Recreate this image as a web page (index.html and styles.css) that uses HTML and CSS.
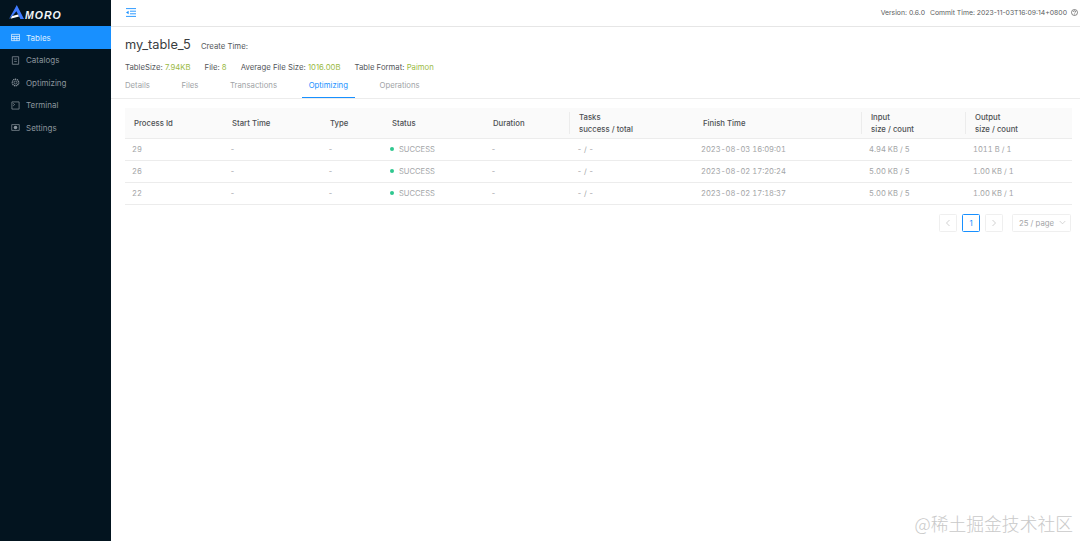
FILE: index.html
```html
<!DOCTYPE html>
<html lang="en">
<head>
<meta charset="utf-8">
<title>Amoro</title>
<link rel="stylesheet" href="styles.css">
</head>
<body>
<div class="app">
  <aside class="sidebar">
    <div class="logo">
      <svg class="logo-mark" viewBox="0 0 15 14"><path d="M7.8 0 L15 14 L11.4 14 L7.4 6.2 L3.8 10.6 L0 14 Z" fill="#3f7bff"/><path d="M3.2 11 L9 9.6 L10 11.4 L1.5 13.8 Z" fill="#fff"/></svg>
      <span class="logo-text">MORO</span>
    </div>
    <nav class="menu">
      <a class="menu-item active">
        <svg class="menu-icon" viewBox="0 0 10 10"><path d="M.5 1.5h9v7h-9zM.5 3.8h9M.5 6.2h9M3.5 3.8v4.7M6.5 3.8v4.7" fill="none" stroke="currentColor" stroke-width=".9"/></svg>
        <span>Tables</span>
      </a>
      <a class="menu-item">
        <svg class="menu-icon" viewBox="0 0 10 10"><path d="M1.5 .8h7v8.4h-7zM3.5 3.5h3M3.5 6h3" fill="none" stroke="currentColor" stroke-width=".8"/></svg>
        <span>Catalogs</span>
      </a>
      <a class="menu-item">
        <svg class="menu-icon" viewBox="0 0 10 10"><circle cx="5" cy="5" r="1.6" fill="none" stroke="currentColor" stroke-width=".8"/><circle cx="5" cy="5" r="3.6" fill="none" stroke="currentColor" stroke-width="1.5" stroke-dasharray="1.3 .7"/></svg>
        <span>Optimizing</span>
      </a>
      <a class="menu-item">
        <svg class="menu-icon" viewBox="0 0 10 10"><path d="M1 1h8v8H1zM2.4 2.6 4 4 2.4 5.4" fill="none" stroke="currentColor" stroke-width=".8"/></svg>
        <span>Terminal</span>
      </a>
      <a class="menu-item">
        <svg class="menu-icon" viewBox="0 0 10 10"><path d="M.8 1.8h8.4v6.4H.8z" fill="none" stroke="currentColor" stroke-width=".8"/><circle cx="5" cy="5" r="2" fill="currentColor"/></svg>
        <span>Settings</span>
      </a>
    </nav>
  </aside>
  <main class="main">
    <header class="topbar">
      <svg class="collapse" viewBox="0 0 10 9"><path d="M0 .6h10M4 3.2h6M4 5.8h6M0 8.4h10" stroke="#1890ff" stroke-width=".9" fill="none"/><path d="M2.6 2.8v3.4L0 4.5z" fill="#1890ff"/></svg>
      <div class="version">
        <span>Version: 0.6.0</span>
        <span>Commit Time: 2023-11-03T16:09:14+0800</span>
        <svg class="help" viewBox="0 0 10 10"><circle cx="5" cy="5" r="4.3" fill="none" stroke="#444" stroke-width=".9"/><path d="M3.5 4a1.5 1.4 0 1 1 2.2 1.2c-.5.3-.7.5-.7 1" fill="none" stroke="#444" stroke-width=".9"/><circle cx="5" cy="7.4" r=".55" fill="#444"/></svg>
      </div>
    </header>
    <section class="detail">
      <div class="title-row">
        <h1 class="title">my_table_5</h1>
        <span class="create">Create Time:</span>
      </div>
      <div class="stats">
        <span>TableSize: <b>7.94KB</b></span>
        <span>File: <b>8</b></span>
        <span>Average File Size: <b>1016.00B</b></span>
        <span>Table Format: <b>Paimon</b></span>
      </div>
      <div class="tabs">
        <a class="tab">Details</a>
        <a class="tab">Files</a>
        <a class="tab">Transactions</a>
        <a class="tab current">Optimizing</a>
        <a class="tab">Operations</a>
      </div>
    </section>
    <section class="content">
      <table class="grid">
        <colgroup>
          <col class="c1"><col class="c2"><col class="c3"><col class="c4"><col class="c5"><col class="c6"><col class="c7"><col class="c8"><col class="c9">
        </colgroup>
        <thead>
          <tr>
            <th>Process Id</th><th>Start Time</th><th>Type</th><th>Status</th><th>Duration</th>
            <th class="sep">Tasks<br>success / total</th>
            <th>Finish Time</th>
            <th class="sep">Input<br>size / count</th>
            <th class="sep">Output<br>size / count</th>
          </tr>
        </thead>
        <tbody>
          <tr><td>29</td><td>-</td><td>-</td><td><i class="dot"></i>SUCCESS</td><td>-</td><td>- / -</td><td>2023-08-03 16:09:01</td><td>4.94 KB / 5</td><td>1011 B / 1</td></tr>
          <tr><td>26</td><td>-</td><td>-</td><td><i class="dot"></i>SUCCESS</td><td>-</td><td>- / -</td><td>2023-08-02 17:20:24</td><td>5.00 KB / 5</td><td>1.00 KB / 1</td></tr>
          <tr><td>22</td><td>-</td><td>-</td><td><i class="dot"></i>SUCCESS</td><td>-</td><td>- / -</td><td>2023-08-02 17:18:37</td><td>5.00 KB / 5</td><td>1.00 KB / 1</td></tr>
        </tbody>
      </table>
      <div class="pager">
        <span class="page-btn"><svg viewBox="0 0 6 8"><path d="M4.5 1 1.5 4l3 3" fill="none" stroke="#c4c4c4" stroke-width=".8"/></svg></span>
        <span class="page-btn on">1</span>
        <span class="page-btn"><svg viewBox="0 0 6 8"><path d="M1.5 1l3 3-3 3" fill="none" stroke="#c4c4c4" stroke-width=".8"/></svg></span>
        <span class="page-size">25 / page<svg viewBox="0 0 8 5"><path d="M.8.8 4 4 7.2.8" fill="none" stroke="#c4c4c4" stroke-width=".8"/></svg></span>
      </div>
    </section>
  </main>
</div>
<div class="watermark">@稀土掘金技术社区</div>
</body>
</html>
```
FILE: styles.css
```css
* { box-sizing: border-box; }
html, body { margin: 0; height: 100%; overflow: hidden; background: #fff; }
body { font-family: Inter, "Liberation Sans", sans-serif; font-size: 7.75px; color: #53565a; }
.app { display: flex; height: 100vh; }

.sidebar { width: 111px; flex: none; background: #03141f; color: #8b959d; font-size: 8px; }
.logo { height: 26px; display: flex; align-items: center; padding-left: 9px; gap: 1px; }
.logo-mark { width: 15px; height: 14px; margin-top: -2px; }
.logo-text { font-family: "Liberation Sans", sans-serif; font-weight: 700; font-style: italic; font-size: 10.5px; letter-spacing: 1px; color: #f2f5f8; margin-top: 3px; }
.menu { display: flex; flex-direction: column; }
.menu-item { height: 22.5px; padding-top: 1px; display: flex; align-items: center; gap: 6px; padding-left: 11px; }
.menu-item.active { background: #1890ff; color: #dceeff; }
.menu-icon { width: 9px; height: 9px; flex: none; }

.main { flex: 1; min-width: 0; display: flex; flex-direction: column; }
.topbar { height: 27px; flex: none; display: flex; align-items: center; justify-content: space-between; padding: 0 2px 0 15px; border-bottom: 1px solid #e6e6e6; }
.collapse { width: 10px; height: 9px; margin-top: -2px; }
.version { display: flex; align-items: center; gap: 5px; font-size: 6.85px; color: #5a5d60; margin-top: -1px; }
.help { width: 7px; height: 7px; margin-left: -1px; }

.detail { padding: 0 0 0 14px; border-bottom: 1px solid #ececec; height: 72px; flex: none; }
.title-row { display: flex; align-items: baseline; gap: 10px; padding-top: 9px; }
.title { margin: 0; font-size: 12.8px; line-height: 18px; font-weight: 400; color: #3a3d40; }
.create { color: #54575a; font-size: 7.75px; }
.stats { display: flex; gap: 14px; margin-top: 7px; line-height: 12px; }
.stats b { font-weight: 400; color: #9aba45; }
.tabs { display: flex; gap: 31.6px; margin-top: 6px; }
.tab { height: 19px; margin-bottom: -1px; line-height: 13px; color: #a0a3a6; }
.tab.current { margin: 0 -7px -1px; padding: 0 7px; color: #1890ff; border-bottom: 1.5px solid #1890ff; }

.content { flex: 1; padding: 9px 8px 0 14px; }
.grid { width: 947px; border-collapse: collapse; table-layout: fixed; }
.c1, .c2 { width: 98px; }
.c3 { width: 62px; }
.c4 { width: 101px; }
.c5 { width: 86px; }
.c6 { width: 124px; }
.c7 { width: 168px; }
.c8 { width: 104px; }
.c9 { width: 106px; }
.grid th { height: 30px; padding: 1px 0 0 9px; background: #fafafa; font-weight: 500; text-align: left; line-height: 12.5px; color: #4d5053; position: relative; border-bottom: 1px solid #ececec; }
.grid th.sep::before { content: ""; position: absolute; left: -1px; top: 4px; bottom: 4px; width: 1px; background: #ececec; }
.grid td { height: 22px; padding: 0 0 0 7px; color: #a3a5a7; border-bottom: 1px solid #ececec; font-size: 7.6px; font-variant-numeric: tabular-nums; }
.dot { display: inline-block; width: 4px; height: 4px; border-radius: 50%; background: #2fc78f; margin-right: 5px; vertical-align: 1px; }

.pager { display: flex; justify-content: flex-end; align-items: center; gap: 5px; margin-top: 9px; margin-right: 1px; }
.page-btn { width: 18px; height: 18px; border: 1px solid #efefef; border-radius: 1.5px; display: flex; align-items: center; justify-content: center; color: #a3a5a7; }
.page-btn svg { width: 6px; height: 8px; }
.page-btn.on { border-color: #1890ff; color: #1890ff; }
.page-size { margin-left: 4px; width: 59px; height: 18px; border: 1px solid #efefef; border-radius: 1.5px; padding: 0 4px 0 6px; display: flex; align-items: center; justify-content: space-between; color: #a3a5a7; }
.page-size svg { width: 7px; height: 5px; }

.watermark { position: absolute; right: 7px; bottom: 7px; font-family: "Noto Sans CJK SC", sans-serif; font-size: 17.8px; line-height: 22px; color: #c9c9c9; font-weight: 300; }
```
